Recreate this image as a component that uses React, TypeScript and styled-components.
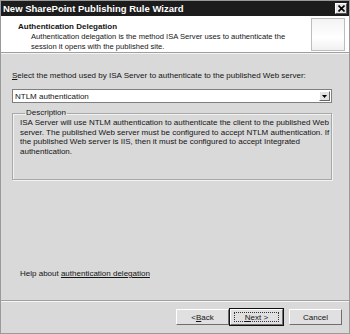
import React from "react";
import styled, { createGlobalStyle } from "styled-components";

const Global = createGlobalStyle`
  html, body {
    margin: 0;
    padding: 0;
    background: #d9d9d9;
  }
  * {
    box-sizing: border-box;
  }
`;

const Window = styled.div`
  width: 350px;
  height: 334px;
  display: flex;
  flex-direction: column;
  background: #d9d9d9;
  border: 1px solid #9a9a9a;
  font-family: "Liberation Sans", Arial, sans-serif;
  font-size: 8px;
  color: #141414;
  overflow: hidden;
`;

const TitleBar = styled.div`
  height: 15px;
  background: #1c1c1c;
  display: flex;
  align-items: center;
  justify-content: space-between;
  padding: 0 2px 0 2px;
`;

const TitleText = styled.span`
  color: #fff;
  font-weight: bold;
  font-size: 9.5px;
`;

const CloseButton = styled.div`
  width: 12px;
  height: 11px;
  background: #e4e4e4;
  border: 1px solid #fff;
  border-right-color: #555;
  border-bottom-color: #555;
  display: flex;
  align-items: center;
  justify-content: center;
`;

const Header = styled.div`
  height: 37px;
  background: #fff;
  display: flex;
  justify-content: space-between;
  padding: 5px 4px 0 17px;
  border-bottom: 1px solid #9e9e9e;
`;

const HeaderText = styled.div`
  display: flex;
  flex-direction: column;
`;

const HeaderTitle = styled.div`
  font-weight: bold;
  font-size: 8px;
  line-height: 11px;
`;

const Line = styled.div`
  white-space: nowrap;
`;

const HeaderDesc = styled.div`
  padding-left: 13px;
  font-size: 7.6px;
  line-height: 10px;
`;

const HeaderIcon = styled.div`
  width: 34px;
  height: 33px;
  margin-top: -3px;
  border: 1px solid #bdbdbd;
  background: linear-gradient(180deg, #f4f4f4 0%, #fbfbfb 40%, #ffffff 60%, #f0f0f0 100%);
`;

const Body = styled.div`
  flex: 1;
  display: flex;
  flex-direction: column;
  padding: 17px 17px 0 11px;
  border-top: 1px solid #f4f4f4;
`;

const Prompt = styled.div`
  line-height: 10px;
  white-space: nowrap;
`;

const Select = styled.div`
  margin-top: 8px;
  height: 14px;
  background: #fff;
  border: 1px solid #7f7f7f;
  display: flex;
  align-items: center;
  justify-content: space-between;
  padding-left: 2px;
`;

const Arrow = styled.div`
  width: 11px;
  height: 10px;
  margin-right: 1px;
  background: #e2e2e2;
  border: 1px solid #fff;
  border-right-color: #666;
  border-bottom-color: #666;
  display: flex;
  align-items: center;
  justify-content: center;
`;

const Group = styled.fieldset`
  margin: 6px 0 0 0;
  padding: 1px 7px 0 7px;
  height: 71px;
  border: 1px solid #a8a8a8;
  box-shadow: inset 1px 1px 0 #f2f2f2, 1px 1px 0 #f2f2f2;
  min-width: 0;
`;

const Legend = styled.legend`
  padding: 0 1px;
  margin-left: 5px;
  line-height: 8px;
`;

const GroupText = styled.div`
  line-height: 9.5px;
`;

const Spacer = styled.div`
  flex: 1;
`;

const Help = styled.div`
  padding-left: 8px;
  margin-bottom: 22px;
`;

const HelpLink = styled.span`
  text-decoration: underline;
`;

const Footer = styled.div`
  height: 33px;
  border-top: 1px solid #a0a0a0;
  box-shadow: inset 0 1px 0 #f4f4f4;
  display: flex;
  align-items: flex-start;
  justify-content: flex-end;
  padding: 8px 7px 0 0;
  gap: 6px;
`;

const ButtonPair = styled.div`
  display: flex;
  gap: 1px;
`;

const Button = styled.div<{ $primary?: boolean }>`
  width: 53px;
  height: 16px;
  background: #e0e0e0;
  border: 1px solid #fff;
  border-right-color: #6e6e6e;
  border-bottom-color: #6e6e6e;
  outline: ${(p) => (p.$primary ? "1px solid #111" : "none")};
  display: flex;
  align-items: center;
  justify-content: center;
`;

const FocusBox = styled.span`
  width: 45px;
  height: 10px;
  border: 1px dotted #333;
  display: flex;
  align-items: center;
  justify-content: center;
`;

const U = styled.span`
  text-decoration: underline;
`;

export default function App() {
  return (
    <>
      <Global />
      <Window>
        <TitleBar>
          <TitleText>New SharePoint Publishing Rule Wizard</TitleText>
          <CloseButton>
            <svg width="7" height="7" viewBox="0 0 7 7">
              <path d="M0.5 0.5 L6.5 6.5 M6.5 0.5 L0.5 6.5" stroke="#000" strokeWidth="1.6" />
            </svg>
          </CloseButton>
        </TitleBar>
        <Header>
          <HeaderText>
            <HeaderTitle>Authentication Delegation</HeaderTitle>
            <HeaderDesc>
              <Line>Authentication delegation is the method ISA Server uses to authenticate the</Line>
              <Line>session it opens with the published site.</Line>
            </HeaderDesc>
          </HeaderText>
          <HeaderIcon />
        </Header>
        <Body>
          <Prompt>
            <U>S</U>elect the method used by ISA Server to authenticate to the published Web server:
          </Prompt>
          <Select>
            <span>NTLM authentication</span>
            <Arrow>
              <svg width="5" height="3" viewBox="0 0 5 3">
                <path d="M0 0 H5 L2.5 3 Z" fill="#000" />
              </svg>
            </Arrow>
          </Select>
          <Group>
            <Legend>Description</Legend>
            <GroupText>
              <Line>ISA Server will use NTLM authentication to authenticate the client to the published Web</Line>
              <Line>server. The published Web server must be configured to accept NTLM authentication. If</Line>
              <Line>the published Web server is IIS, then it must be configured to accept Integrated</Line>
              <Line>authentication.</Line>
            </GroupText>
          </Group>
          <Spacer />
          <Help>
            Help about <HelpLink>authentication delegation</HelpLink>
          </Help>
        </Body>
        <Footer>
          <ButtonPair>
            <Button>
              &lt; <U>B</U>ack
            </Button>
            <Button $primary>
              <FocusBox>
                <span>
                  <U>N</U>ext &gt;
                </span>
              </FocusBox>
            </Button>
          </ButtonPair>
          <Button>Cancel</Button>
        </Footer>
      </Window>
    </>
  );
}
